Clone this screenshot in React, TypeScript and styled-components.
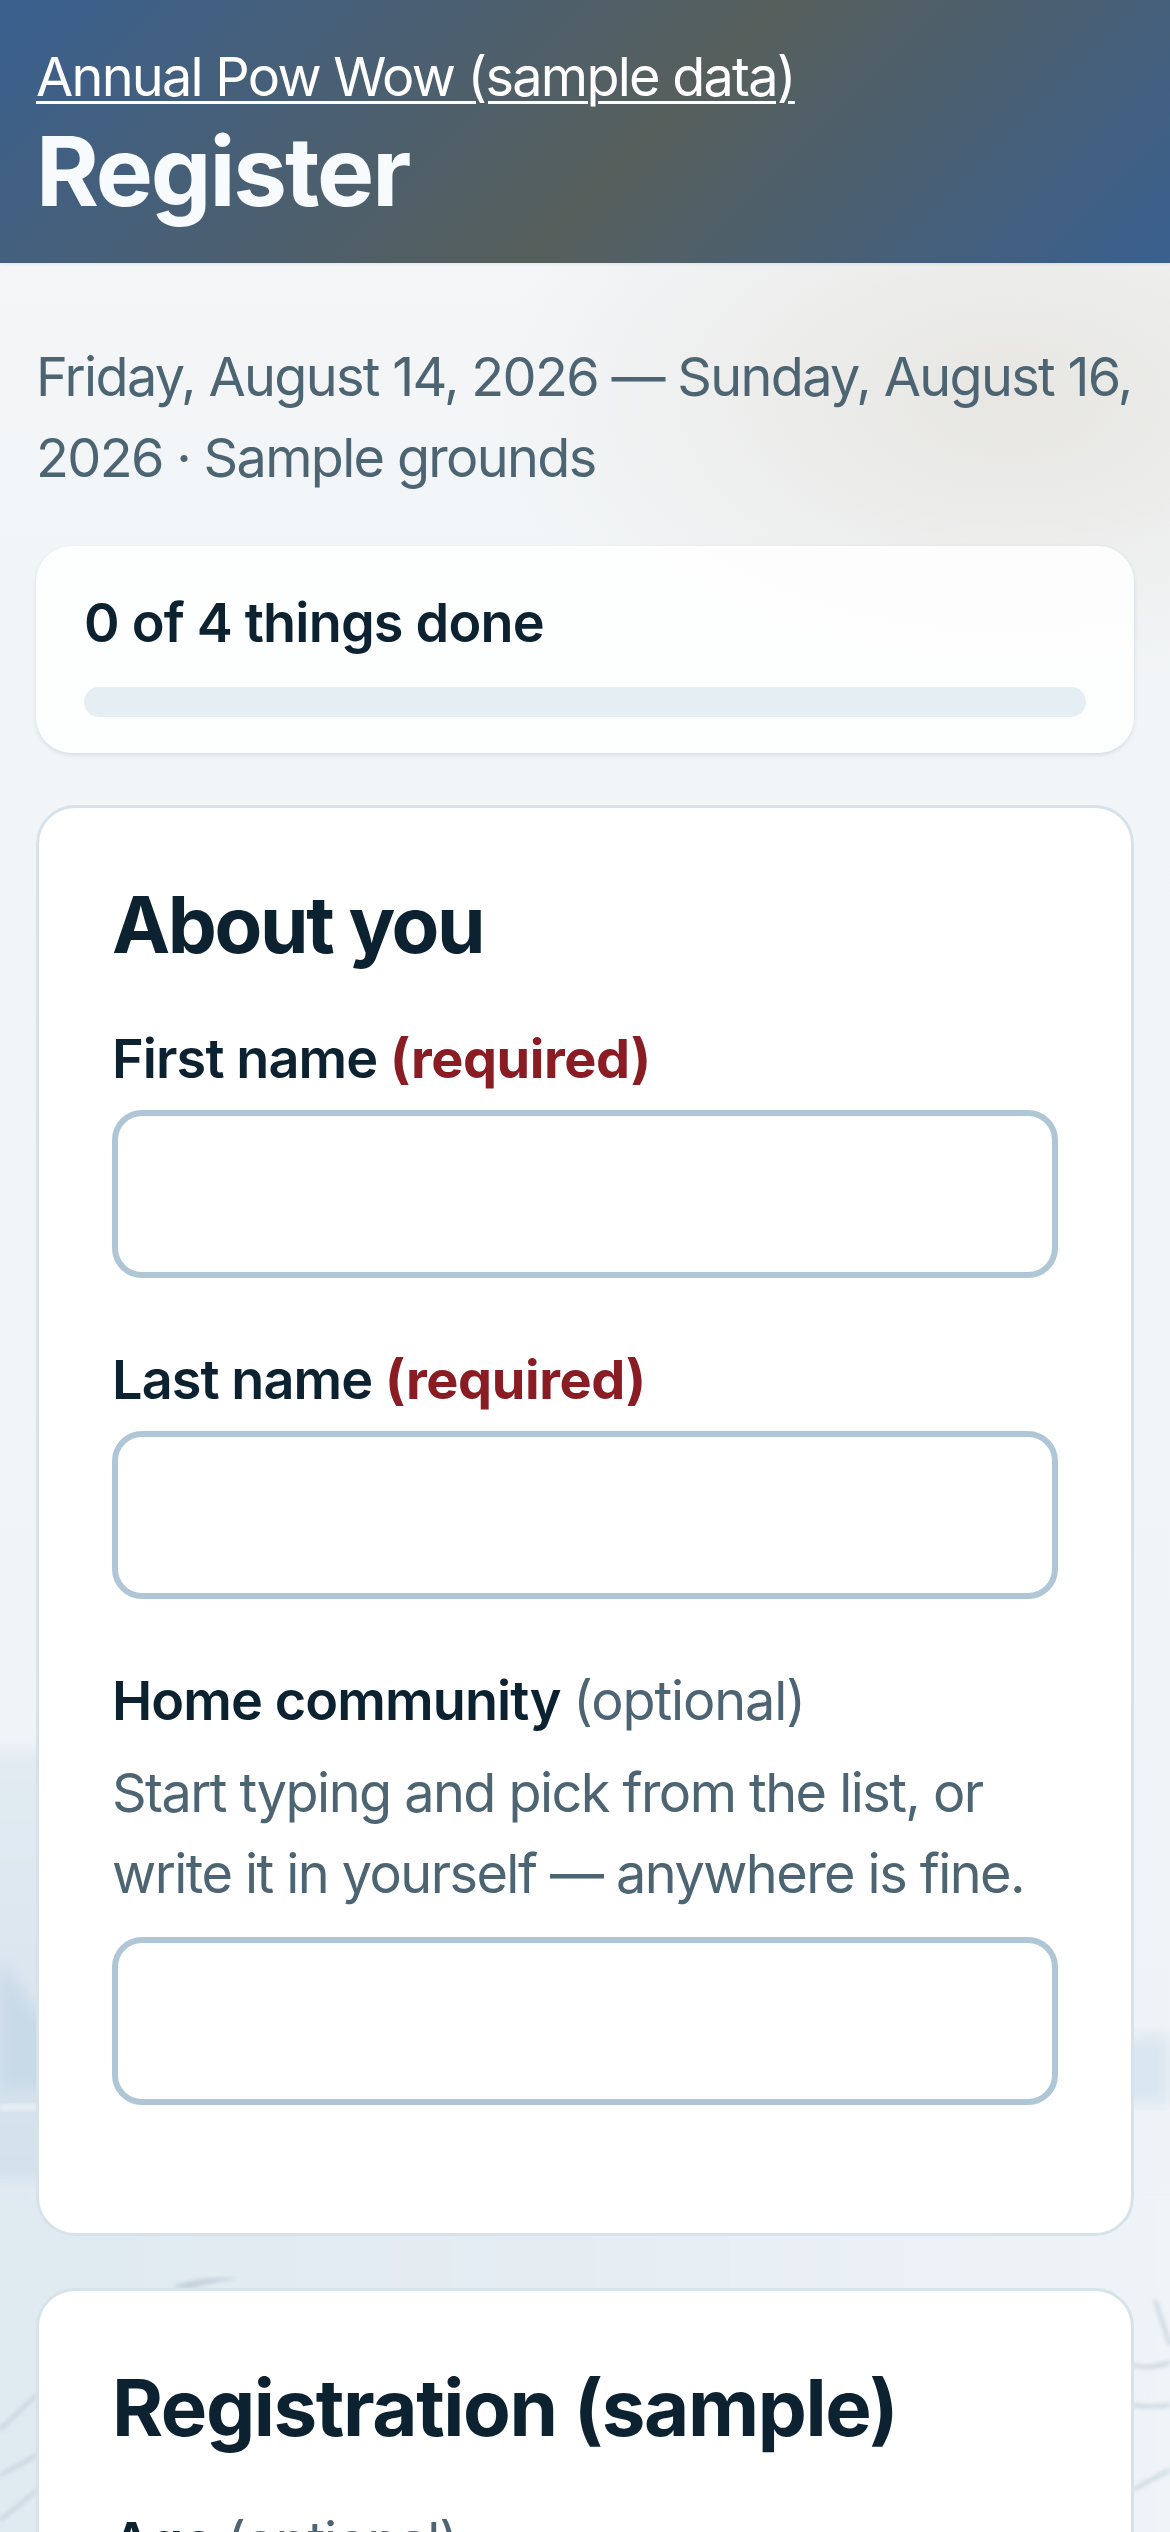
import React from "react";
import styled, { createGlobalStyle } from "styled-components";

const Global = createGlobalStyle`
  html, body { margin: 0; padding: 0; }
  body {
    font-family: Inter, "Noto Sans", sans-serif;
    background: #f1f5f8;
    color: #0c2230;
  }
`;

const Page = styled.div`
  position: relative;
  width: 1170px;
  height: 2532px;
  overflow: hidden;
  background: #f2f6f9;
`;

const Scenery = styled.svg`
  position: absolute;
  inset: 0;
  width: 1170px;
  height: 2532px;
`;

const Content = styled.div`
  position: relative;
`;

const Header = styled.header`
  height: 263px;
  box-sizing: border-box;
  padding: 43px 36px 0;
  background: linear-gradient(135deg, #39608f 0%, #575f5c 55%, #39608f 100%);
  box-shadow: 0 1px 4px rgba(13, 34, 48, 0.08);
  color: #fff;
`;

const Crumb = styled.a`
  display: block;
  font-size: 54px;
  line-height: 68px;
  letter-spacing: -1.75px;
  color: #fff;
  text-decoration: underline;
  text-decoration-thickness: 3px;
  text-underline-offset: 5px;
`;

const Title = styled.h1`
  margin: 10px 0 0;
  font-size: 96px;
  line-height: 100px;
  font-weight: 700;
  letter-spacing: -2.1px;
  color: #f7fbfe;
`;

const Main = styled.main`
  padding: 73px 36px 0;
`;

const Meta = styled.p`
  margin: 0 0 48px;
  font-size: 54px;
  line-height: 81px;
  letter-spacing: -1.68px;
  color: #4d6472;
`;

const Progress = styled.section`
  box-sizing: border-box;
  height: 207px;
  border-radius: 36px;
  padding: 46px 48px 0;
  background: rgba(255, 255, 255, 0.86);
  box-shadow: 0 2px 4px rgba(120, 160, 185, 0.28);
  margin-bottom: 52px;
`;

const ProgressLabel = styled.div`
  font-size: 54px;
  line-height: 62px;
  font-weight: 600;
  letter-spacing: -0.8px;
`;

const Track = styled.div`
  height: 30px;
  margin-top: 33px;
  border-radius: 15px;
  background: #e5eef3;
`;

const Card = styled.section`
  box-sizing: border-box;
  border: 3px solid #d6e3ea;
  border-radius: 39px;
  background: #fff;
  padding: 72px 73px 0;
  margin-bottom: 52px;
`;

const Heading = styled.h2<{ $tracking: number }>`
  margin: 0 0 58px;
  font-size: 78px;
  line-height: 90px;
  font-weight: 700;
  letter-spacing: ${(p) => p.$tracking}px;
  color: #0c2230;
`;

const Field = styled.div<{ $last?: boolean }>`
  margin-bottom: ${(p) => (p.$last ? "128px" : "71px")};
`;

const Label = styled.label`
  display: block;
  font-size: 54px;
  line-height: 62px;
  font-weight: 600;
  letter-spacing: -0.9px;
  margin-bottom: 20px;
`;

const Required = styled.span`
  color: #8a1c24;
  font-weight: 700;
  letter-spacing: -0.4px;
`;

const Optional = styled.span`
  color: #4d6472;
  font-weight: 400;
  letter-spacing: -1.1px;
`;

const Hint = styled.p`
  margin: 2px 0 23px;
  font-size: 54px;
  line-height: 81px;
  letter-spacing: -1.55px;
  color: #4d6472;
`;

const Input = styled.input`
  display: block;
  box-sizing: border-box;
  width: 100%;
  height: 168px;
  border: 6px solid #aec6d6;
  border-radius: 30px;
  background: #fff;
`;

export default function App() {
  return (
    <Page>
      <Global />
      <Scenery viewBox="0 0 1170 2532" aria-hidden="true">
        <defs>
          <linearGradient id="sky" x1="0" y1="0" x2="0" y2="1">
            <stop offset="0" stopColor="#f4f6f7" />
            <stop offset="0.45" stopColor="#f1f5f8" />
            <stop offset="0.68" stopColor="#eff4f7" />
            <stop offset="1" stopColor="#eef3f7" />
          </linearGradient>
          <linearGradient id="lake" x1="0" y1="0" x2="0" y2="1">
            <stop offset="0" stopColor="#e2ebf2" />
            <stop offset="0.55" stopColor="#dae5ef" />
            <stop offset="1" stopColor="#d3e0eb" />
          </linearGradient>
          <linearGradient id="ground" x1="0" y1="0" x2="1" y2="0">
            <stop offset="0" stopColor="#dfe9f1" />
            <stop offset="0.5" stopColor="#e5edf3" />
            <stop offset="1" stopColor="#eff4f8" />
          </linearGradient>
          <radialGradient id="warm">
            <stop offset="0" stopColor="#e7e6e2" stopOpacity="1" />
            <stop offset="1" stopColor="#e7e6e2" stopOpacity="0" />
          </radialGradient>
          <filter id="soft"><feGaussianBlur stdDeviation="8" /></filter>
          <filter id="softer"><feGaussianBlur stdDeviation="2" /></filter>
        </defs>
        <rect width="1170" height="2532" fill="url(#sky)" />
        <ellipse cx="1010" cy="400" rx="520" ry="300" fill="url(#warm)" />
        <rect x="-30" y="1750" width="450" height="440" fill="url(#lake)" filter="url(#soft)" />
        <path d="M0 1960 L40 2020 L70 1990 L70 2090 L0 2090 Z" fill="#c8d9e7" filter="url(#soft)" />
        <rect x="0" y="2104" width="60" height="7" fill="#e6eef4" filter="url(#softer)" />
        <rect x="-30" y="2180" width="1230" height="390" fill="url(#ground)" filter="url(#soft)" />
        <path d="M1100 2050 Q1140 2030 1170 2036 L1170 2104 L1100 2104 Z" fill="#dae6f0" filter="url(#soft)" />
        <path d="M170 2287 Q200 2276 240 2278 Q205 2284 188 2289 Z" fill="#c3d0da" filter="url(#softer)" />
        <g fill="none" stroke="#c2cfd9" strokeWidth="3" filter="url(#softer)">
          <path d="M0 2430 Q20 2410 37 2395" />
          <path d="M0 2475 Q20 2465 37 2455" />
          <path d="M0 2520 Q20 2505 37 2490" />
          <path d="M1155 2300 Q1165 2330 1170 2345" />
          <path d="M1133 2365 Q1150 2370 1170 2362" />
          <path d="M1133 2405 Q1150 2408 1170 2405" />
          <path d="M1133 2490 Q1150 2480 1170 2470" />
        </g>
      </Scenery>
      <Content>
        <Header>
          <Crumb href="#">Annual Pow Wow (sample data)</Crumb>
          <Title>Register</Title>
        </Header>
        <Main>
          <Meta>Friday, August 14, 2026 — Sunday, August 16, 2026 · Sample grounds</Meta>
          <Progress>
            <ProgressLabel>0 of 4 things done</ProgressLabel>
            <Track />
          </Progress>
          <Card>
            <Heading $tracking={-2.4}>About you</Heading>
            <Field>
              <Label>First name <Required>(required)</Required></Label>
              <Input />
            </Field>
            <Field>
              <Label>Last name <Required>(required)</Required></Label>
              <Input />
            </Field>
            <Field $last>
              <Label>Home community <Optional>(optional)</Optional></Label>
              <Hint>Start typing and pick from the list, or write it in yourself — anywhere is fine.</Hint>
              <Input />
            </Field>
          </Card>
          <Card>
            <Heading $tracking={-1.4}>Registration (sample)</Heading>
            <Field>
              <Label>Age <Optional>(optional)</Optional></Label>
              <Input />
            </Field>
          </Card>
        </Main>
      </Content>
    </Page>
  );
}
